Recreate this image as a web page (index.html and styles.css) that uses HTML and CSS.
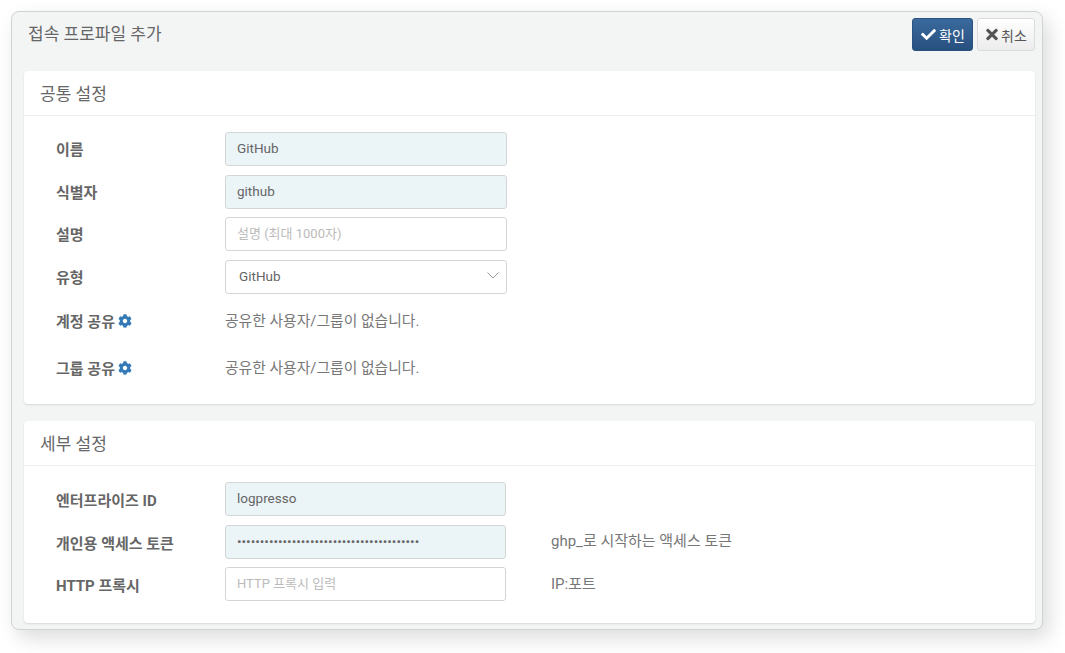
FILE: index.html
```html
<!DOCTYPE html>
<html lang="ko">
<head>
    <meta charset="UTF-8">
    <meta name="viewport" content="width=device-width, initial-scale=1.0">
    <title>접속 프로파일 추가</title>
    <link rel="stylesheet" href="styles.css">
</head>
<body>
    <div class="dialog">
        <div class="dialog-head">
            <h1 class="dialog-title">접속 프로파일 추가</h1>
            <div class="dialog-actions">
                <button class="btn btn-primary">
                    <svg class="btn-icon-check" viewBox="0 0 512 512" fill="currentColor"><path d="M173.898 439.404l-166.4-166.4c-9.997-9.997-9.997-26.206 0-36.204l36.203-36.204c9.997-10 26.207-10 36.204 0L192 312.69 432.095 72.596c9.997-9.997 26.207-9.997 36.204 0l36.203 36.204c9.997 9.997 9.997 26.206 0 36.204l-294.4 294.401c-9.998 9.997-26.207 9.997-36.204-.001z"/></svg>
                    확인
                </button>
                <button class="btn btn-default">
                    <svg class="btn-icon-times" viewBox="0 0 352 512" fill="currentColor"><path d="M242.72 256l100.07-100.07c12.28-12.28 12.28-32.19 0-44.48l-22.24-22.24c-12.28-12.28-32.19-12.28-44.48 0L176 189.28 75.93 89.21c-12.28-12.28-32.19-12.28-44.48 0L9.21 111.45c-12.28 12.28-12.28 32.19 0 44.48L109.28 256 9.21 356.07c-12.28 12.28-12.28 32.19 0 44.48l22.24 22.24c12.28 12.28 32.2 12.28 44.48 0L176 322.72l100.07 100.07c12.28 12.28 32.2 12.28 44.48 0l22.24-22.24c12.28-12.28 12.28-32.19 0-44.48L242.72 256z"/></svg>
                    취소
                </button>
            </div>
        </div>

        <section class="panel panel-common">
            <h2 class="panel-title">공통 설정</h2>
            <div class="panel-body">
                <div class="form-row">
                    <label class="form-label">이름</label>
                    <input class="form-input filled" type="text" value="GitHub">
                </div>
                <div class="form-row">
                    <label class="form-label">식별자</label>
                    <input class="form-input filled" type="text" value="github">
                </div>
                <div class="form-row">
                    <label class="form-label">설명</label>
                    <input class="form-input" type="text" placeholder="설명 (최대 1000자)">
                </div>
                <div class="form-row">
                    <label class="form-label">유형</label>
                    <div class="select-wrap">
                        <select class="form-input form-select">
                            <option>GitHub</option>
                        </select>
                        <svg class="select-arrow" viewBox="0 0 12 7" fill="none" stroke="currentColor" stroke-width="1"><path d="M.5.5 6 6 11.5.5"/></svg>
                    </div>
                </div>
                <div class="form-row static-row">
                    <label class="form-label">계정 공유
                        <svg class="gear" viewBox="0 0 512 512" fill="currentColor"><path d="M487.4 315.7l-42.6-24.6c4.3-23.2 4.3-47 0-70.2l42.6-24.6c4.9-2.8 7.1-8.6 5.5-14-11.1-35.6-30-67.8-54.7-94.6-3.8-4.1-10-5.1-14.8-2.3L380.8 110c-17.9-15.4-38.5-27.3-60.8-35.1V25.8c0-5.6-3.9-10.5-9.4-11.7-36.7-8.2-74.3-7.8-109.2 0-5.5 1.2-9.4 6.1-9.4 11.7V75c-22.2 7.9-42.8 19.8-60.8 35.1L88.7 85.5c-4.9-2.8-11-1.9-14.8 2.3-24.7 26.7-43.6 58.9-54.7 94.6-1.7 5.4.6 11.2 5.5 14L67.3 221c-4.3 23.2-4.3 47 0 70.2l-42.6 24.6c-4.9 2.8-7.1 8.6-5.5 14 11.1 35.6 30 67.8 54.7 94.6 3.8 4.1 10 5.1 14.8 2.3l42.6-24.6c17.9 15.4 38.5 27.3 60.8 35.1v49.2c0 5.6 3.9 10.5 9.4 11.7 36.7 8.2 74.3 7.8 109.2 0 5.5-1.2 9.4-6.1 9.4-11.7v-49.2c22.2-7.9 42.8-19.8 60.8-35.1l42.6 24.6c4.9 2.8 11 1.9 14.8-2.3 24.7-26.7 43.6-58.9 54.7-94.6 1.5-5.5-.7-11.3-5.6-14.1zM256 336c-44.1 0-80-35.9-80-80s35.9-80 80-80 80 35.9 80 80-35.9 80-80 80z"/></svg>
                    </label>
                    <span class="form-text">공유한 사용자/그룹이 없습니다.</span>
                </div>
                <div class="form-row static-row">
                    <label class="form-label">그룹 공유
                        <svg class="gear" viewBox="0 0 512 512" fill="currentColor"><path d="M487.4 315.7l-42.6-24.6c4.3-23.2 4.3-47 0-70.2l42.6-24.6c4.9-2.8 7.1-8.6 5.5-14-11.1-35.6-30-67.8-54.7-94.6-3.8-4.1-10-5.1-14.8-2.3L380.8 110c-17.9-15.4-38.5-27.3-60.8-35.1V25.8c0-5.6-3.9-10.5-9.4-11.7-36.7-8.2-74.3-7.8-109.2 0-5.5 1.2-9.4 6.1-9.4 11.7V75c-22.2 7.9-42.8 19.8-60.8 35.1L88.7 85.5c-4.9-2.8-11-1.9-14.8 2.3-24.7 26.7-43.6 58.9-54.7 94.6-1.7 5.4.6 11.2 5.5 14L67.3 221c-4.3 23.2-4.3 47 0 70.2l-42.6 24.6c-4.9 2.8-7.1 8.6-5.5 14 11.1 35.6 30 67.8 54.7 94.6 3.8 4.1 10 5.1 14.8 2.3l42.6-24.6c17.9 15.4 38.5 27.3 60.8 35.1v49.2c0 5.6 3.9 10.5 9.4 11.7 36.7 8.2 74.3 7.8 109.2 0 5.5-1.2 9.4-6.1 9.4-11.7v-49.2c22.2-7.9 42.8-19.8 60.8-35.1l42.6 24.6c4.9 2.8 11 1.9 14.8-2.3 24.7-26.7 43.6-58.9 54.7-94.6 1.5-5.5-.7-11.3-5.6-14.1zM256 336c-44.1 0-80-35.9-80-80s35.9-80 80-80 80 35.9 80 80-35.9 80-80 80z"/></svg>
                    </label>
                    <span class="form-text">공유한 사용자/그룹이 없습니다.</span>
                </div>
            </div>
        </section>

        <section class="panel panel-detail">
            <h2 class="panel-title">세부 설정</h2>
            <div class="panel-body">
                <div class="form-row wide-hint">
                    <label class="form-label">엔터프라이즈 ID</label>
                    <input class="form-input filled" type="text" value="logpresso">
                </div>
                <div class="form-row wide-hint">
                    <label class="form-label">개인용 액세스 토큰</label>
                    <input class="form-input filled" type="password" value="0000000000000000000000000000000000000000">
                    <span class="form-text hint">ghp_로 시작하는 액세스 토큰</span>
                </div>
                <div class="form-row wide-hint">
                    <label class="form-label">HTTP 프록시</label>
                    <input class="form-input" type="text" placeholder="HTTP 프록시 입력">
                    <span class="form-text hint">IP:포트</span>
                </div>
            </div>
        </section>
    </div>
</body>
</html>
```

FILE: styles.css
```css
* {
    box-sizing: border-box;
}

html, body {
    height: 100%;
}

body {
    margin: 0;
    padding: 11px 0 0 11px;
    background-color: #fff;
    color: #666;
    font-family: Roboto, "Noto Sans CJK KR", sans-serif;
    font-size: 14px;
    overflow: hidden;
}

.dialog {
    width: 1032px;
    height: 619px;
    padding: 0 7px 0 12px;
    background-color: #f3f5f5;
    border: 1px solid #d0d3d3;
    border-radius: 8px;
    box-shadow: 6px 8px 20px rgba(0, 0, 0, 0.14);
}

.dialog-head {
    display: flex;
    justify-content: space-between;
    height: 59px;
    padding: 5px 0 0 4px;
}

.dialog-title {
    margin: 5px 0 0;
    font-size: 17px;
    font-weight: 400;
    line-height: 24px;
}

.dialog-actions {
    display: flex;
    gap: 4px;
    height: 33px;
    margin-top: 1px;
}

.btn {
    display: flex;
    align-items: center;
    justify-content: flex-start;
    gap: 3px;
    padding: 0 0 0 8px;
    border-radius: 3px;
    font-family: inherit;
    font-size: 14px;
    white-space: nowrap;
}

.btn svg {
    flex-shrink: 0;
}

.btn-primary {
    width: 61px;
    color: #fff;
    background: linear-gradient(#3a6a9e, #28507f);
    border: 1px solid #2a5280;
}

.btn-default {
    width: 58px;
    color: #555;
    background: linear-gradient(#fff, #ececec);
    border: 1px solid #dcdcdc;
}

.btn-icon-check {
    width: 15px;
    height: 15px;
}

.btn-icon-times {
    width: 12px;
    height: 17px;
}

.panel {
    background-color: #fff;
    border-radius: 4px;
    box-shadow: 0 1px 2px rgba(0, 0, 0, 0.12);
}

.panel-common {
    height: 333px;
    margin-bottom: 17px;
}

.panel-detail {
    height: 202px;
}

.panel-title {
    height: 45px;
    margin: 0;
    padding: 11px 16px 0;
    font-size: 17px;
    font-weight: 400;
    line-height: 24px;
    border-bottom: 1px solid #eee;
}

.panel-body {
    padding: 16px 0 0 32px;
}

.form-row {
    display: grid;
    grid-template-columns: 169px 282px auto;
    align-items: center;
    height: 34px;
    margin-bottom: 8.67px;
}

.wide-hint {
    grid-template-columns: 169px 281px auto;
}

.wide-hint .form-label {
    padding-top: 4px;
}

.static-row {
    align-items: start;
    height: 38.33px;
    padding-top: 8.33px;
}

.static-row .form-label {
    padding-top: 1px;
}

.static-row .form-text {
    font-size: 14.8px;
}

.form-label {
    font-size: 15px;
    font-weight: 700;
    line-height: 20px;
    padding-top: 2px;
    color: #666;
}

.gear {
    width: 14px;
    height: 14px;
    margin-left: -1px;
    vertical-align: -1px;
    color: #337ab7;
}

.form-input {
    width: 100%;
    height: 34px;
    padding: 0 11px 2px;
    color: #666;
    background-color: #fff;
    border: 1px solid #d4d6d6;
    border-radius: 3px;
    font-family: inherit;
    font-size: 13.5px;
    outline: none;
}

.form-input::placeholder {
    color: #bbb;
    font-size: 13px;
}

.form-input.filled {
    background-color: #ebf4f7;
}

.select-wrap {
    position: relative;
}

.form-select {
    appearance: none;
    padding-left: 13px;
}

.select-arrow {
    position: absolute;
    top: 12px;
    right: 8px;
    width: 12px;
    height: 7px;
    color: #999;
}

.form-text {
    font-size: 15px;
    line-height: 20px;
    color: #777;
}

.hint {
    margin-left: 45px;
    margin-top: -1px;
}
```
